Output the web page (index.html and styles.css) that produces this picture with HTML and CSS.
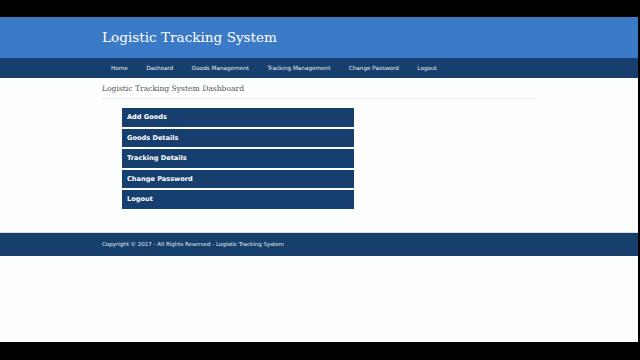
FILE: index.html
```html
<!DOCTYPE html>
<html lang="en">
<head>
    <meta charset="UTF-8">
    <meta name="viewport" content="width=device-width, initial-scale=1.0">
    <title>Logistic Tracking System</title>
    <link rel="stylesheet" href="styles.css">
</head>
<body>
    <div class="frame">
        <!-- Cabeçalho -->
        <header class="topo">
            <div class="container">
                <h1>Logistic Tracking System</h1>
            </div>
        </header>

        <!-- Menu -->
        <nav class="menu">
            <div class="container">
                <a href="#">Home</a>
                <a href="#">Dashoard</a>
                <a href="#">Goods Management</a>
                <a href="#">Tracking Management</a>
                <a href="#">Change Password</a>
                <a href="#">Logout</a>
            </div>
        </nav>

        <!-- Conteúdo -->
        <main class="container conteudo">
            <h2>Logistic Tracking System Dashboard</h2>
            <div class="lista">
                <a href="#" class="botao">Add Goods</a>
                <a href="#" class="botao">Goods Details</a>
                <a href="#" class="botao">Tracking Details</a>
                <a href="#" class="botao">Change Password</a>
                <a href="#" class="botao">Logout</a>
            </div>
        </main>

        <footer class="rodape">
            <div class="container">
                Copyright &copy; 2017 - All Rights Reserved - Logistic Tracking System
            </div>
        </footer>
    </div>
</body>
</html>
```

FILE: styles.css
```css
/* Estilos gerais */
html, body {
    margin: 0;
    padding: 0;
    background: #000;
    height: 100%;
}

.frame {
    margin-top: 17px;
    height: 325px;
    margin-right: 2px;
    background: #fbfefd;
    overflow: hidden;
    font-family: 'DejaVu Sans', Verdana, sans-serif;
}

.container {
    width: 434px;
    margin: 0 auto;
}

/* Cabeçalho */
.topo {
    background-color: #3a7ac6;
    height: 41px;
    display: flex;
    align-items: center;
}

.topo h1 {
    margin: 0;
    font-family: 'DejaVu Serif', Georgia, serif;
    font-weight: normal;
    font-size: 13.6px;
    color: #fff;
    padding-bottom: 2px;
}

/* Menu */
.menu {
    background-color: #163f6e;
    height: 20px;
    display: flex;
    align-items: center;
}

.menu .container {
    display: flex;
    padding-left: 9px;
    box-sizing: border-box;
}

.menu a {
    color: #e8eef6;
    text-decoration: none;
    font-size: 5.7px;
    margin-right: 18.4px;
}

/* Conteúdo */
.conteudo h2 {
    margin: 0;
    padding: 6px 0 5px;
    font-family: 'DejaVu Serif', Georgia, serif;
    font-weight: normal;
    font-size: 7.6px;
    color: #555;
    border-bottom: 1px solid #eef0f0;
}

.lista {
    display: flex;
    flex-direction: column;
    gap: 2px;
    width: 232px;
    margin: 9px 0 0 20px;
}

.botao {
    display: flex;
    align-items: center;
    height: 18.5px;
    padding-left: 5px;
    background-color: #163f6f;
    color: #fff;
    font-weight: bold;
    font-size: 6.6px;
    text-decoration: none;
}

/* Rodapé */
.rodape {
    margin-top: 23px;
    background-color: #173f6c;
    height: 23px;
    display: flex;
    align-items: center;
    border-top: 1px solid #cde0ec;
    color: #e4ebf3;
    font-size: 5.5px;
}
```
